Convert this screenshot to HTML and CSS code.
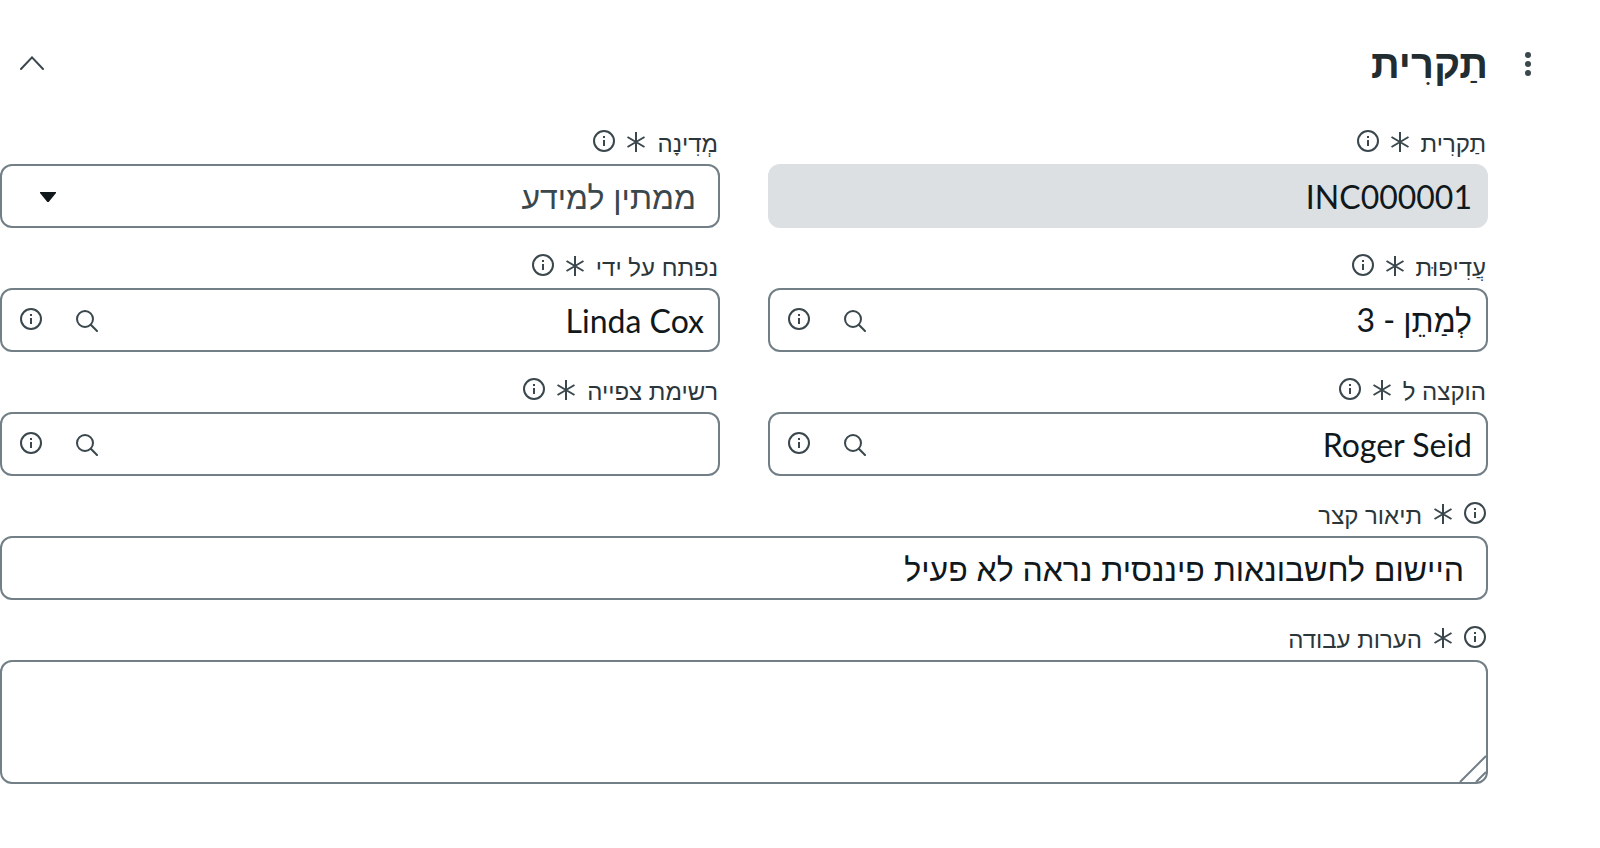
FILE: index.html
```html
<!DOCTYPE html>
<html lang="he" dir="rtl">
<head>
<meta charset="utf-8">
<meta name="viewport" content="width=device-width, initial-scale=1">
<title>תַקרִית</title>
<link rel="stylesheet" href="styles.css">
</head>
<body>
<svg class="sprite" aria-hidden="true">
  <symbol id="info" viewBox="0 0 22 22">
    <circle cx="11" cy="11" r="10" fill="none" stroke="currentColor" stroke-width="2"/>
    <path d="M10 6h2v2h-2zM10 10h2v6h-2z" fill="currentColor"/>
  </symbol>
  <symbol id="required" viewBox="0 0 18 20">
    <path d="M9 0v20M0.5 5l17 10M17.5 5l-17 10" fill="none" stroke="currentColor" stroke-width="2"/>
  </symbol>
  <symbol id="search" viewBox="0 0 22 22">
    <circle cx="9" cy="9" r="8" fill="none" stroke="currentColor" stroke-width="2"/>
    <path d="M14.8 14.8l6.2 6.2" fill="none" stroke="currentColor" stroke-width="2" stroke-linecap="round"/>
  </symbol>
</svg>
<main class="record">
  <header class="record-header">
    <button class="icon-button menu-button" type="button" aria-label="תפריט">
      <svg width="6" height="24" viewBox="0 0 6 24"><g fill="currentColor"><circle cx="3" cy="3" r="3"/><circle cx="3" cy="12" r="3"/><circle cx="3" cy="21" r="3"/></g></svg>
    </button>
    <h1 class="record-title">תַקרִית</h1>
    <button class="icon-button collapse-button" type="button" aria-label="כיווץ">
      <svg width="24" height="14" viewBox="0 0 24 14"><path d="M1 13L12 1.4L23 13" fill="none" stroke="currentColor" stroke-width="2" stroke-linecap="round"/></svg>
    </button>
  </header>
  <form class="record-form">
    <div class="field">
      <div class="field-label">
        <label for="number">תַקרִית</label>
        <svg class="required"><use href="#required"/></svg>
        <svg class="info"><use href="#info"/></svg>
      </div>
      <div class="control control-readonly"><input class="control-input" id="number" type="text" value="INC000001" readonly></div>
    </div>
    <div class="field">
      <div class="field-label">
        <label for="state">מְדִינָה</label>
        <svg class="required"><use href="#required"/></svg>
        <svg class="info"><use href="#info"/></svg>
      </div>
      <div class="control control-select">
        <select class="control-input" id="state"><option>ממתין למידע</option></select>
        <svg class="caret" width="16" height="10" viewBox="0 0 16 10"><path d="M0 0h16v1L8.700 10h-1.400L0 1z" fill="currentColor"/></svg>
      </div>
    </div>
    <div class="field">
      <div class="field-label">
        <label for="priority">עֲדִיפוּת</label>
        <svg class="required"><use href="#required"/></svg>
        <svg class="info"><use href="#info"/></svg>
      </div>
      <div class="control">
        <input class="control-input" id="priority" type="text" value="לְמַתֵן - 3">
        <button class="icon-button search-button" type="button" aria-label="חיפוש"><svg class="search"><use href="#search"/></svg></button>
        <button class="icon-button info-button" type="button" aria-label="מידע"><svg class="info"><use href="#info"/></svg></button>
      </div>
    </div>
    <div class="field">
      <div class="field-label">
        <label for="opened-by">נפתח על ידי</label>
        <svg class="required"><use href="#required"/></svg>
        <svg class="info"><use href="#info"/></svg>
      </div>
      <div class="control">
        <input class="control-input" id="opened-by" type="text" value="Linda Cox">
        <button class="icon-button search-button" type="button" aria-label="חיפוש"><svg class="search"><use href="#search"/></svg></button>
        <button class="icon-button info-button" type="button" aria-label="מידע"><svg class="info"><use href="#info"/></svg></button>
      </div>
    </div>
    <div class="field">
      <div class="field-label">
        <label for="assigned-to">הוקצה ל</label>
        <svg class="required"><use href="#required"/></svg>
        <svg class="info"><use href="#info"/></svg>
      </div>
      <div class="control">
        <input class="control-input" id="assigned-to" type="text" value="Roger Seid">
        <button class="icon-button search-button" type="button" aria-label="חיפוש"><svg class="search"><use href="#search"/></svg></button>
        <button class="icon-button info-button" type="button" aria-label="מידע"><svg class="info"><use href="#info"/></svg></button>
      </div>
    </div>
    <div class="field">
      <div class="field-label">
        <label for="watch-list">רשימת צפייה</label>
        <svg class="required"><use href="#required"/></svg>
        <svg class="info"><use href="#info"/></svg>
      </div>
      <div class="control">
        <input class="control-input" id="watch-list" type="text">
        <button class="icon-button search-button" type="button" aria-label="חיפוש"><svg class="search"><use href="#search"/></svg></button>
        <button class="icon-button info-button" type="button" aria-label="מידע"><svg class="info"><use href="#info"/></svg></button>
      </div>
    </div>
    <div class="field field-wide">
      <div class="field-label">
        <svg class="info"><use href="#info"/></svg>
        <svg class="required"><use href="#required"/></svg>
        <label for="short-description">תיאור קצר</label>
      </div>
      <div class="control control-text"><input class="control-input" id="short-description" type="text" value="היישום לחשבונאות פיננסית נראה לא פעיל"></div>
    </div>
    <div class="field field-wide">
      <div class="field-label">
        <svg class="info"><use href="#info"/></svg>
        <svg class="required"><use href="#required"/></svg>
        <label for="work-notes">הערות עבודה</label>
      </div>
      <div class="control control-area">
        <textarea class="control-input" id="work-notes"></textarea>
        <svg class="resizer" width="28" height="28" viewBox="0 0 28 28"><path d="M1 27L27 1M17 27L27 17" fill="none" stroke="currentColor" stroke-width="2"/></svg>
      </div>
    </div>
  </form>
</main>
</body>
</html>
```
FILE: styles.css
```css
:root {
  --text: #10181b;
  --text-soft: #3a474d;
  --label: #2b363b;
  --line: #727f86;
  --readonly: #dce0e3;
  --hebrew: "Liberation Sans", Arial, sans-serif;
}

* {
  box-sizing: border-box;
}

body {
  margin: 0;
  background: #fff;
  color: var(--text);
  font-family: Lato, "Liberation Sans", sans-serif;
}

.sprite {
  position: absolute;
  width: 0;
  height: 0;
}

.record {
  padding-top: 24px;
}

.record-header {
  display: flex;
  align-items: center;
  height: 80px;
  padding-right: 56px;
  padding-left: 12px;
}

.record-title {
  flex: 1;
  margin: 0 24px 0 0;
  color: #222d32;
  font-family: var(--hebrew);
  font-size: 40px;
  line-height: 48px;
  font-weight: 700;
}

.icon-button {
  display: flex;
  align-items: center;
  justify-content: center;
  flex: none;
  margin: 0;
  padding: 0;
  border: 0;
  background: none;
  color: var(--text-soft);
  cursor: pointer;
}

.menu-button {
  width: 32px;
  height: 40px;
}

.collapse-button {
  width: 40px;
  height: 40px;
  padding-bottom: 2px;
}

.record-form {
  display: grid;
  grid-template-columns: 1fr 1fr;
  column-gap: 48px;
  margin-right: 112px;
}

.field {
  min-width: 0;
  padding-top: 26px;
}

.field-wide {
  grid-column: 1 / -1;
}

.field-label {
  display: flex;
  align-items: flex-start;
  gap: 12px;
  height: 22px;
  margin-bottom: 12px;
  padding-right: 2px;
  color: var(--text-soft);
}

.field-label label {
  color: var(--label);
  font-family: var(--hebrew);
  font-size: 24px;
  line-height: 28px;
}

.info,
.search {
  display: block;
  width: 22px;
  height: 22px;
}

.required {
  display: block;
  width: 18px;
  height: 20px;
  margin-top: 2px;
}

.control {
  display: flex;
  align-items: center;
  height: 64px;
  border: 2px solid var(--line);
  border-radius: 12px;
  background: #fff;
}

.control-input {
  flex: 1;
  min-width: 0;
  width: 100%;
  height: 100%;
  margin: 0;
  padding: 0 14px;
  border: 0;
  border-radius: 10px;
  outline: 0;
  background: none;
  color: inherit;
  font: inherit;
  font-size: 32px;
  appearance: none;
}

.control-readonly {
  border-color: var(--readonly);
  background: var(--readonly);
}

.control-text .control-input {
  padding: 4px 22px 0;
  font-family: var(--hebrew);
}

.control-select {
  position: relative;
  color: var(--text);
}

.control-select .control-input {
  padding: 4px 22px 0;
  color: var(--text-soft);
  font-family: var(--hebrew);
}

.caret {
  position: absolute;
  top: 26px;
  left: 38px;
  pointer-events: none;
}

.search-button,
.info-button {
  justify-content: flex-end;
  width: 56px;
  height: 60px;
  padding-left: 18px;
}

.info-button {
  padding-bottom: 2px;
}

.search-button {
  padding-top: 2px;
}

.control-area {
  position: relative;
  height: 124px;
}

.control-area .control-input {
  padding: 8px 22px;
  resize: none;
}

.resizer {
  position: absolute;
  right: -1px;
  bottom: -1px;
  color: var(--line);
  pointer-events: none;
}
```
